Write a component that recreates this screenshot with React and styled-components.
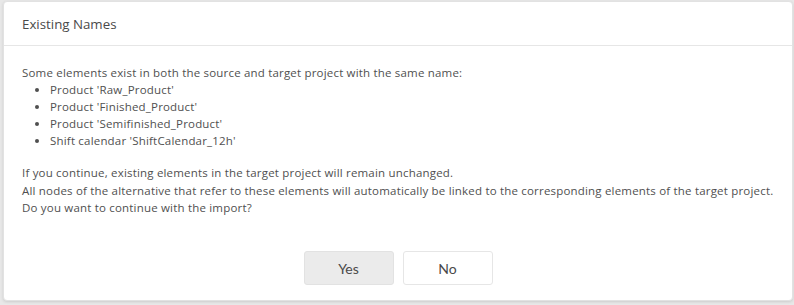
import React from 'react';
import styled, { createGlobalStyle } from 'styled-components';

const GlobalStyle = createGlobalStyle`
  html, body {
    margin: 0;
    padding: 0;
    background: #e8e8e8;
  }
  body {
    font-family: "Open Sans", "Noto Sans", sans-serif;
  }
`;

const Backdrop = styled.div`
  width: 794px;
  height: 305px;
  padding: 1px 1px 0 3px;
  box-sizing: border-box;
  overflow: hidden;
`;

const Dialog = styled.div`
  width: 790px;
  height: 300px;
  box-sizing: border-box;
  background: #fff;
  border: 1px solid #e2e2e2;
  border-radius: 4px;
  box-shadow: 0 1px 3px rgba(0, 0, 0, 0.12);
  display: flex;
  flex-direction: column;
`;

const Header = styled.div`
  height: 43px;
  display: flex;
  align-items: center;
  padding: 0 18px;
  border-bottom: 1px solid #e6e6e6;
  font-size: 13.3px;
  color: #4a4a4a;
`;

const Body = styled.div`
  flex: 1;
  padding: 18px 10px 0 18px;
  font-size: 11.5px;
  letter-spacing: 0.19px;
  line-height: 17.1px;
  color: #505050;
  white-space: nowrap;
`;

const Para = styled.p`
  margin: 0;
  & + & {
    margin-top: 15px;
  }
`;

const List = styled.ul`
  margin: 0;
  padding-left: 28px;
`;

const Footer = styled.div`
  display: flex;
  justify-content: center;
  gap: 9px;
  padding-bottom: 15px;
`;

const Button = styled.button`
  width: 90px;
  height: 34px;
  border-radius: 3px;
  border: 1px solid ${(p) => (p.$primary ? '#e2e2e2' : '#e6e6e6')};
  background: ${(p) => (p.$primary ? '#ebebeb' : '#fff')};
  font-family: Lato, "Open Sans", sans-serif;
  font-size: 14px;
  color: #4a4a4a;
  cursor: pointer;
`;

const items = [
  "Product 'Raw_Product'",
  "Product 'Finished_Product'",
  "Product 'Semifinished_Product'",
  "Shift calendar 'ShiftCalendar_12h'",
];

export default function App() {
  return (
    <Backdrop>
      <GlobalStyle />
      <Dialog>
        <Header>Existing Names</Header>
        <Body>
          <Para>
            Some elements exist in both the source and target project with the same name:
            <List>
              {items.map((it) => (
                <li key={it}>{it}</li>
              ))}
            </List>
          </Para>
          <Para>
            If you continue, existing elements in the target project will remain unchanged.
            <br />
            All nodes of the alternative that refer to these elements will automatically be linked to the corresponding elements of the target project.
            <br />
            Do you want to continue with the import?
          </Para>
        </Body>
        <Footer>
          <Button $primary>Yes</Button>
          <Button>No</Button>
        </Footer>
      </Dialog>
    </Backdrop>
  );
}
